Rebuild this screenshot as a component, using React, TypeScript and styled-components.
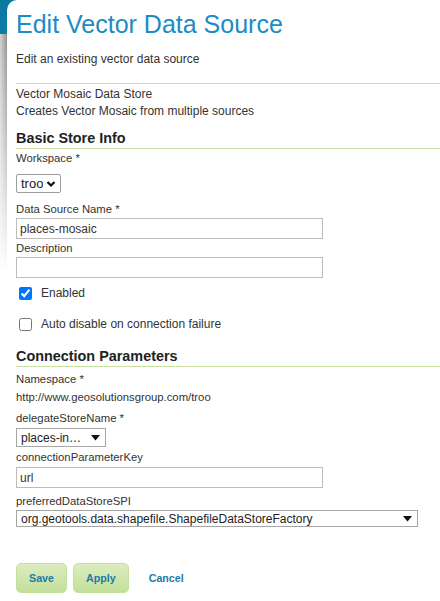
import React from 'react';
import styled, { createGlobalStyle } from 'styled-components';

const GlobalStyle = createGlobalStyle`
  html, body {
    margin: 0;
    padding: 0;
    background: #fff;
  }
  body {
    font-family: "Liberation Sans", Arial, sans-serif;
    font-size: 12px;
    color: #333;
  }
`;

const Page = styled.div`
  display: flex;
  min-height: 601px;
  background: linear-gradient(to bottom, #0b78a2 0, #0d7ca6 34px, transparent 34px);
`;

const Gutter = styled.div`
  flex: none;
  width: 7px;
  margin-top: 34px;
  background:
    linear-gradient(to bottom, rgba(255, 255, 255, 0) 0, #fff 240px),
    linear-gradient(to right, #d2d2d2 0, #a4a4a4 5px, #8e8e8e 7px);
`;

const Panel = styled.main`
  flex: 1;
  display: flex;
  flex-direction: column;
  align-items: flex-start;
  background: #fff;
  border-top-left-radius: 10px;
  padding: 10px 0 0 9px;
`;

const Title = styled.h1`
  margin: 0;
  font-size: 25px;
  line-height: 29px;
  font-weight: normal;
  color: #1b8cc4;
`;

const Subtitle = styled.p`
  margin: 13px 0 0;
  font-size: 12px;
  line-height: 14px;
`;

const StoreType = styled.div`
  align-self: stretch;
  margin-top: 17px;
  padding-top: 2px;
  border-top: 1px solid #c8e1a2;
  font-size: 12px;
  line-height: 17px;
`;

const Section = styled.section<{ $mt: number }>`
  align-self: stretch;
  display: flex;
  flex-direction: column;
  align-items: flex-start;
  margin-top: ${p => p.$mt}px;
`;

const SectionTitle = styled.h2`
  align-self: stretch;
  margin: 0;
  padding-bottom: 1px;
  border-bottom: 1px solid #c8e1a2;
  font-size: 14.4px;
  line-height: 17px;
  font-weight: bold;
  color: #222;
`;

const Label = styled.label<{ $mt: number }>`
  display: block;
  margin-top: ${p => p.$mt}px;
  font-size: 11.3px;
  line-height: 14px;
  color: #333;
`;

const Value = styled.div<{ $mt: number }>`
  margin-top: ${p => p.$mt}px;
  font-size: 11.3px;
  line-height: 14px;
  color: #333;
`;

const TextInput = styled.input<{ $mt: number }>`
  box-sizing: border-box;
  width: 307px;
  height: 21px;
  margin: ${p => p.$mt}px 0 0;
  padding: 0 3px;
  border: 1px solid #bcbcbc;
  border-radius: 0;
  background: #fff;
  font-family: inherit;
  font-size: 12px;
  color: #333;
  outline: none;
`;

const Dropdown = styled.button<{ $mt: number; $w: number; $h: number }>`
  box-sizing: border-box;
  display: flex;
  align-items: center;
  justify-content: space-between;
  width: ${p => p.$w}px;
  height: ${p => p.$h}px;
  margin: ${p => p.$mt}px 0 0;
  padding: 0 5px 0 4px;
  border: 1px solid #a6a6a6;
  border-radius: 0;
  background: #fff;
  font-family: inherit;
  font-size: 12px;
  color: #222;
  text-align: left;
  cursor: pointer;
`;

const WorkspaceSelect = styled(Dropdown)`
  font-size: 13px;
  padding: 0 4px 0 4px;
  border-color: #9d9d9d;
  border-radius: 2px;
`;

const DropText = styled.span`
  white-space: nowrap;
  overflow: hidden;
`;

const Caret = () => (
  <svg width="9" height="6" viewBox="0 0 9 6">
    <polygon points="0,0 9,0 4.5,5.5" fill="#111" />
  </svg>
);

const Chevron = () => (
  <svg width="10" height="8" viewBox="0 0 10 8">
    <polyline points="1.5,2 5,5.5 8.5,2" fill="none" stroke="#111" strokeWidth="2.2" />
  </svg>
);

const CheckRow = styled.label<{ $mt: number }>`
  display: flex;
  align-items: center;
  gap: 9px;
  margin-top: ${p => p.$mt}px;
  padding-left: 3px;
  font-size: 12px;
  line-height: 14px;
  color: #333;
`;

const CheckBox = styled.input`
  width: 13px;
  height: 13px;
  margin: 0;
`;

const Actions = styled.div`
  display: flex;
  align-items: center;
  margin-top: 36px;
`;

const Button = styled.button`
  height: 30px;
  margin-right: 6px;
  padding: 0 12px;
  border: 1px solid #c4df9d;
  border-radius: 5px;
  background: linear-gradient(to bottom, #dcedc2 0, #cfe6ab 50%, #c4df9a 100%);
  font-family: inherit;
  font-size: 10.7px;
  font-weight: bold;
  color: #1d7aab;
  cursor: pointer;
`;

const CancelLink = styled.a`
  margin-left: 14px;
  font-size: 10.7px;
  font-weight: bold;
  color: #1d7aab;
  text-decoration: none;
  cursor: pointer;
`;

export default function App() {
  return (
    <>
      <GlobalStyle />
      <Page>
        <Gutter />
        <Panel>
          <Title>Edit Vector Data Source</Title>
          <Subtitle>Edit an existing vector data source</Subtitle>
          <StoreType>
            <div>Vector Mosaic Data Store</div>
            <div>Creates Vector Mosaic from multiple sources</div>
          </StoreType>

          <Section $mt={10}>
            <SectionTitle>Basic Store Info</SectionTitle>
            <Label $mt={2}>Workspace *</Label>
            <WorkspaceSelect type="button" $mt={9} $w={45} $h={19}>
              <DropText>troo</DropText>
              <Chevron />
            </WorkspaceSelect>
            <Label $mt={9}>Data Source Name *</Label>
            <TextInput $mt={2} defaultValue="places-mosaic" />
            <Label $mt={2}>Description</Label>
            <TextInput $mt={2} defaultValue="" />
            <CheckRow $mt={8}>
              <CheckBox type="checkbox" defaultChecked />
              Enabled
            </CheckRow>
            <CheckRow $mt={17}>
              <CheckBox type="checkbox" />
              Auto disable on connection failure
            </CheckRow>
          </Section>

          <Section $mt={17}>
            <SectionTitle>Connection Parameters</SectionTitle>
            <Label $mt={5}>Namespace *</Label>
            <Value $mt={4}>http://www.geosolutionsgroup.com/troo</Value>
            <Label $mt={7}>delegateStoreName *</Label>
            <Dropdown type="button" $mt={3} $w={90} $h={19}>
              <DropText>places-in…</DropText>
              <Caret />
            </Dropdown>
            <Label $mt={3}>connectionParameterKey</Label>
            <TextInput $mt={3} defaultValue="url" />
            <Label $mt={6}>preferredDataStoreSPI</Label>
            <Dropdown type="button" $mt={2} $w={402} $h={17}>
              <DropText>org.geotools.data.shapefile.ShapefileDataStoreFactory</DropText>
              <Caret />
            </Dropdown>
          </Section>

          <Actions>
            <Button type="button">Save</Button>
            <Button type="button">Apply</Button>
            <CancelLink>Cancel</CancelLink>
          </Actions>
        </Panel>
      </Page>
    </>
  );
}
